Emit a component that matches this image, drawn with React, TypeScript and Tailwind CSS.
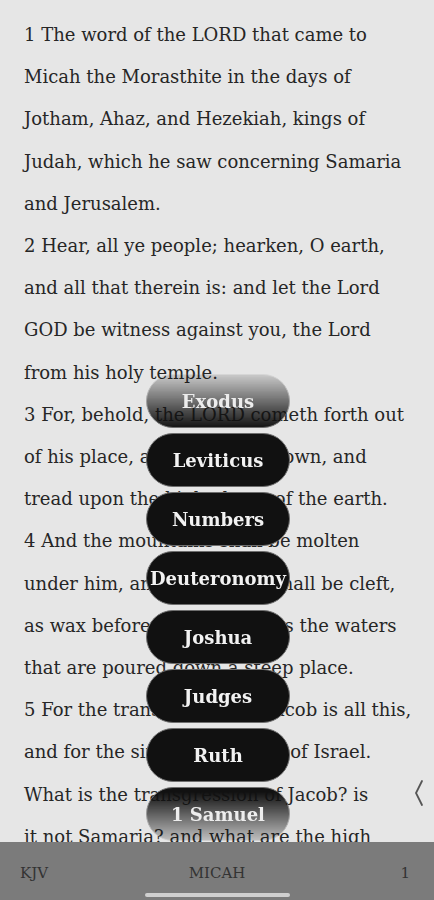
import React from 'react';

const lines = [
  '1 The word of the LORD that came to',
  'Micah the Morasthite in the days of',
  'Jotham, Ahaz, and Hezekiah, kings of',
  'Judah, which he saw concerning Samaria',
  'and Jerusalem.',
  '2 Hear, all ye people; hearken, O earth,',
  'and all that therein is: and let the Lord',
  'GOD be witness against you, the Lord',
  'from his holy temple.',
  '3 For, behold, the LORD cometh forth out',
  'of his place, and will come down, and',
  'tread upon the high places of the earth.',
  '4 And the mountains shall be molten',
  'under him, and the valleys shall be cleft,',
  'as wax before the fire, and as the waters',
  'that are poured down a steep place.',
  '5 For the transgression of Jacob is all this,',
  'and for the sins of the house of Israel.',
  'What is the transgression of Jacob? is',
  'it not Samaria? and what are the high',
  'places of Judah? are they not Jerusalem?',
];

const books = ['Exodus', 'Leviticus', 'Numbers', 'Deuteronomy', 'Joshua', 'Judges', 'Ruth', '1 Samuel'];

const serif = { fontFamily: '"DejaVu Serif", "Liberation Serif", serif' };

const App = () => {
  return (
    <div className="relative w-[434px] h-[900px] overflow-hidden bg-[#e6e6e6] flex flex-col" style={serif}>
      <div className="flex-1 overflow-hidden pt-[14px] pl-6">
        {lines.map((l, i) => (
          <div key={i} className="whitespace-nowrap text-[18px] leading-[42.2px] text-[#262626]">
            {l}
          </div>
        ))}
      </div>

      <div className="h-[58px] bg-[#7b7b7b] flex flex-col">
        <div className="flex items-center px-5 pt-[20px] text-[15px] text-[#333]">
          <span className="w-[80px]">KJV</span>
          <span className="flex-1 text-center">MICAH</span>
          <span className="w-[80px] text-right pr-1">1</span>
        </div>
        <div className="mt-auto mb-[3px] mx-auto w-[145px] h-[4px] rounded-full bg-[#cfcfcf]" />
      </div>

      {/* book wheel */}
      <div
        className="absolute left-[146px] top-[374px] w-[144px] h-[471px] overflow-hidden flex flex-col gap-[5px]"
        style={{
          WebkitMaskImage:
            'linear-gradient(to bottom, rgba(0,0,0,0.12) 0px, rgba(0,0,0,1) 54px, rgba(0,0,0,1) 418px, rgba(0,0,0,0.1) 471px)',
          maskImage:
            'linear-gradient(to bottom, rgba(0,0,0,0.12) 0px, rgba(0,0,0,1) 54px, rgba(0,0,0,1) 418px, rgba(0,0,0,0.1) 471px)',
        }}
      >
        {books.map((b) => (
          <div
            key={b}
            className="shrink-0 h-[54px] rounded-full bg-[#111] border border-[#6e6e6e] flex items-center justify-center text-[#f2f2f2] font-bold text-[18px]"
          >
            {b}
          </div>
        ))}
      </div>

      <svg className="absolute left-[412px] top-[779px]" width="14" height="28" viewBox="0 0 14 28">
        <polyline points="10,2 4,14 10,26" fill="none" stroke="#555" strokeWidth="1.8" strokeLinecap="round" />
      </svg>
    </div>
  );
};

export default App;
